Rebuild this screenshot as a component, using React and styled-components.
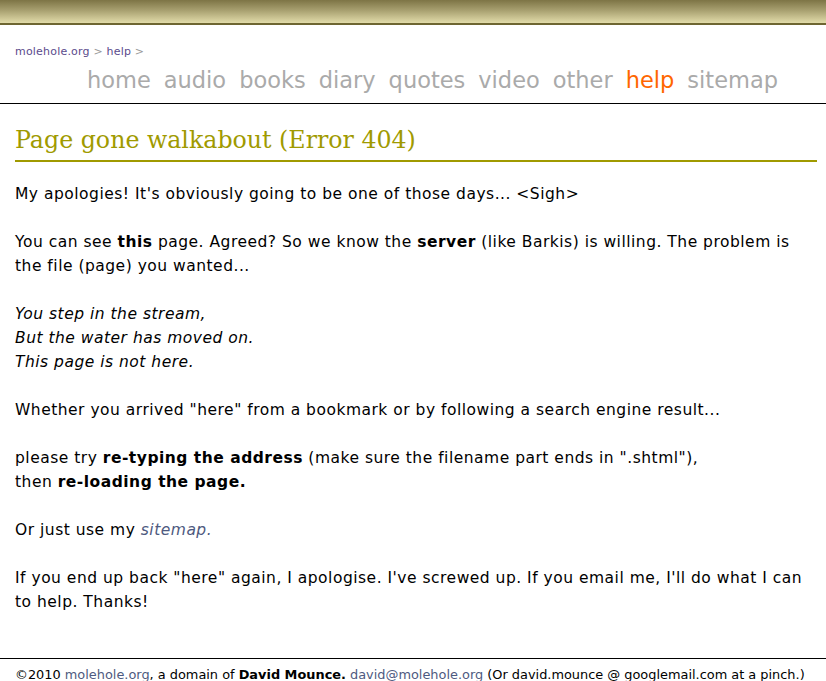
import React from "react";
import styled, { createGlobalStyle } from "styled-components";

const GlobalStyle = createGlobalStyle`
  html, body {
    margin: 0;
    padding: 0;
    background: #fff;
  }
  body {
    font-family: "DejaVu Sans", Verdana, sans-serif;
    color: #000;
  }
`;

const TopBar = styled.div`
  height: 23px;
  background: linear-gradient(to bottom, #7d7445 0%, #a8a070 45%, #e2dcaa 100%);
  border-bottom: 2px solid #6e6632;
`;

const Header = styled.header`
  padding: 20px 48px 0 15px;
  border-bottom: 1px solid #000;
  height: 79px;
  box-sizing: border-box;
`;

const Crumbs = styled.div`
  font-size: 11px;
  line-height: 14px;
  letter-spacing: 0.2px;
  color: #999;

  a {
    color: #5b4b8c;
    text-decoration: none;
  }
`;

const Nav = styled.nav`
  display: flex;
  justify-content: flex-end;
  gap: 13px;
  margin-top: 6px;
`;

const NavLink = styled.a`
  font-size: 22.5px;
  line-height: 30px;
  color: ${(p) => (p.$active ? "#ff6600" : "#aaaaaa")};
  text-decoration: none;
`;

const Main = styled.main`
  padding: 19px 9px 20px 15px;
  min-height: 550px;
  box-sizing: border-box;
`;

const Title = styled.h1`
  font-family: "DejaVu Serif", Georgia, serif;
  font-weight: normal;
  font-size: 23.7px;
  line-height: 34px;
  color: #a09a00;
  margin: 0 0 20px;
  padding-bottom: 3px;
  border-bottom: 2px solid #a09a00;
`;

const Para = styled.p`
  font-size: 15.5px;
  line-height: 24px;
  letter-spacing: 0.5px;
  margin: 0 0 24px;
  font-style: ${(p) => (p.$italic ? "italic" : "normal")};

  a {
    color: #4e5a80;
    text-decoration: none;
  }
`;

const Footer = styled.footer`
  border-top: 1px solid #000;
  padding: 6px 15px;
  font-family: "DejaVu Sans", Tahoma, sans-serif;
  font-size: 12.9px;
  line-height: 20px;
  white-space: nowrap;

  a {
    color: #4e5a80;
    text-decoration: none;
  }
`;

const navItems = ["home", "audio", "books", "diary", "quotes", "video", "other", "help", "sitemap"];

export default function App() {
  return (
    <>
      <GlobalStyle />
      <TopBar />
      <Header>
        <Crumbs>
          <a href="#">molehole.org</a> &gt; <a href="#">help</a> &gt;
        </Crumbs>
        <Nav>
          {navItems.map((item) => (
            <NavLink key={item} href="#" $active={item === "help"}>
              {item}
            </NavLink>
          ))}
        </Nav>
      </Header>
      <Main>
        <Title>Page gone walkabout (Error 404)</Title>
        <Para>My apologies! It's obviously going to be one of those days... &lt;Sigh&gt;</Para>
        <Para>
          You can see <b>this</b> page. Agreed? So we know the <b>server</b> (like Barkis) is
          willing. The problem is the file (page) you wanted...
        </Para>
        <Para $italic>
          You step in the stream,
          <br />
          But the water has moved on.
          <br />
          This page is not here.
        </Para>
        <Para>Whether you arrived "here" from a bookmark or by following a search engine result...</Para>
        <Para>
          please try <b>re-typing the address</b> (make sure the filename part ends in ".shtml"),
          <br />
          then <b>re-loading the page.</b>
        </Para>
        <Para>
          Or just use my <a href="#"><i>sitemap.</i></a>
        </Para>
        <Para>
          If you end up back "here" again, I apologise. I've screwed up. If you email me, I'll do
          what I can to help. Thanks!
        </Para>
      </Main>
      <Footer>
        ©2010 <a href="#">molehole.org</a>, a domain of <b>David Mounce.</b>{" "}
        <a href="#">david@molehole.org</a> (Or david.mounce @ googlemail.com at a pinch.)
      </Footer>
    </>
  );
}
